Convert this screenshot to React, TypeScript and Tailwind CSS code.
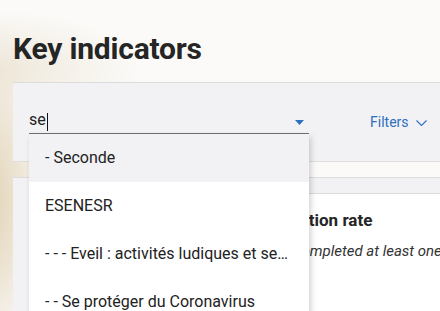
import React from "react";

const items = [
  "- Seconde",
  "ESENESR",
  "- - - Eveil : activités ludiques et sensorielles",
  "- - Se protéger du Coronavirus",
];

export default function App() {
  return (
    <div className="relative w-[440px] h-[311px] overflow-hidden bg-[#fbfaf8] font-['Roboto',sans-serif] text-[#222]">
      <div className="absolute inset-0 bg-[radial-gradient(ellipse_70px_190px_at_-10px_200px,#e2d3b5_0%,#ece3d2_40%,rgba(246,242,235,0.6)_75%,rgba(251,250,248,0)_100%)]" />
      <div className="absolute inset-0 bg-[radial-gradient(ellipse_140px_60px_at_0px_70px,rgba(236,228,212,0.8)_0%,rgba(251,250,248,0)_100%)]" />
      <div className="relative pl-[13px]">
        <h1 className="pt-[31px] h-[82px] text-[30px] leading-[36px] font-bold text-[#252525] tracking-[-0.2px]">
          Key indicators
        </h1>
        <div className="relative h-[80px] bg-[#f2f2f4] border-t border-[#dcdcdc] border-b border-b-[#dedede]">
          <div className="flex items-center pl-4 pt-[26px]">
            <div className="relative w-[280px] h-[25px] border-b border-[#707070] flex items-end">
              <span className="text-[16px] leading-[20px] pb-[3px] text-[#222]">se</span>
              <span className="w-px h-[18px] bg-[#111] mb-[2px] ml-[1px]" />
              <svg className="absolute right-[5px] top-[11px]" width="9" height="5" viewBox="0 0 9 5">
                <path d="M0 0 L9 0 L4.5 5 Z" fill="#2f6fbf" />
              </svg>
              <div className="absolute left-0 top-[25px] w-[280px] bg-white shadow-[2px_3px_6px_rgba(0,0,0,0.18)] z-10">
                {items.map((t, i) => (
                  <div
                    key={i}
                    className={`h-[48px] flex items-center px-4 text-[16px] text-[#222] ${i === 0 ? "bg-[#f2f2f4]" : "bg-white"}`}
                  >
                    <span className="truncate">{t}</span>
                  </div>
                ))}
              </div>
            </div>
            <div className="ml-[61px] flex items-center gap-[7px] text-[#2f6fbf] text-[14px] pt-[2px]">
              <span>Filters</span>
              <svg width="11" height="6" viewBox="0 0 11 6" fill="none">
                <path d="M0.5 0.5 L5.5 5.5 L10.5 0.5" stroke="#2f6fbf" strokeWidth="1.1" />
              </svg>
            </div>
          </div>
        </div>
        <div className="h-[15px]" />
        <div className="h-[200px] bg-[#f2f2f4] border-t border-[#dcdcdc] pt-[15px] pl-4">
          <div className="h-full bg-white border-t border-[#dcdcdc] pl-[114px] pt-[14px]">
            <div className="text-[17px] font-bold text-[#252525] whitespace-nowrap">Learning path completion rate</div>
            <div className="mt-[6px] text-[15px] italic text-[#333] whitespace-nowrap pl-[15px]">% of users who have completed at least one module</div>
          </div>
        </div>
      </div>
    </div>
  );
}
